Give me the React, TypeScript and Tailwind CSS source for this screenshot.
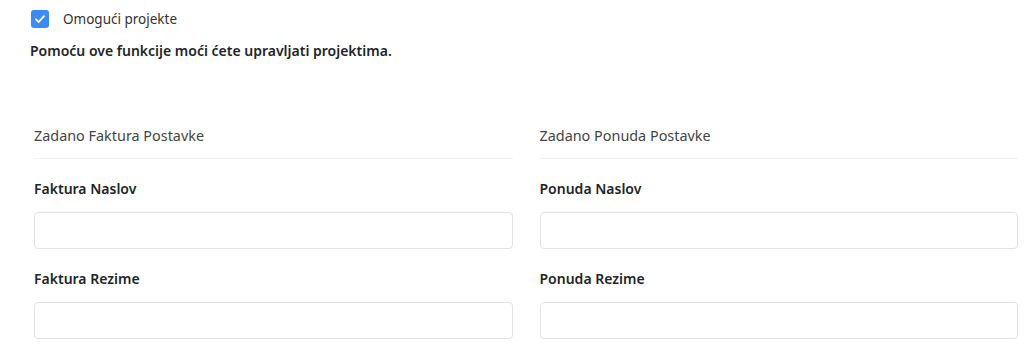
import React from 'react';

const font = { fontFamily: '"Segoe UI", "Noto Sans", sans-serif' };

type Field = { label: string };

function Column({ title, fields }: { title: string; fields: Field[] }) {
  return (
    <div className="flex flex-col">
      <div className="text-[14.4px] leading-[20px] text-[#444] pt-[126px] pb-[12px] border-b border-[#f1f1f1]">
        {title}
      </div>
      {fields.map((f) => (
        <div key={f.label} className="flex flex-col">
          <label className="text-[14px] leading-[20px] font-semibold text-[#212529] mt-[20px] mb-[13px]">
            {f.label}
          </label>
          <input
            type="text"
            className="h-[37px] w-full rounded-[4px] border border-[#e3e3e3] bg-white px-3 text-sm outline-none"
          />
        </div>
      ))}
    </div>
  );
}

export default function App() {
  return (
    <div className="relative w-[1024px] h-[357px] overflow-hidden bg-white" style={font}>
      <div className="absolute left-[31px] top-[10px] flex items-center gap-[14px]">
        <span className="flex h-[18px] w-[18px] items-center justify-center rounded-[3px] bg-[#3b8bf2]">
          <svg width="12" height="12" viewBox="0 0 12 12" fill="none">
            <path d="M2 6.3 L4.8 9 L10 3.2" stroke="white" strokeWidth="1.8" strokeLinecap="round" strokeLinejoin="round" />
          </svg>
        </span>
        <span className="text-[13.5px] leading-[18px] text-[#333]">Omogući projekte</span>
      </div>
      <p className="absolute left-[30px] top-[41px] text-[14px] leading-[20px] font-semibold text-[#212529]">
        Pomoću ove funkcije moći ćete upravljati projektima.
      </p>
      <div className="grid grid-cols-2 gap-x-[27px] pl-[34px] pr-[6px]">
        <Column title="Zadano Faktura Postavke" fields={[{ label: 'Faktura Naslov' }, { label: 'Faktura Rezime' }]} />
        <Column title="Zadano Ponuda Postavke" fields={[{ label: 'Ponuda Naslov' }, { label: 'Ponuda Rezime' }]} />
      </div>
    </div>
  );
}
